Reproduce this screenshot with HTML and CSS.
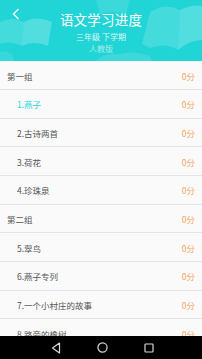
FILE: index.html
```html
<!DOCTYPE html>
<html lang="zh">
<head>
<meta charset="utf-8">
<link rel="stylesheet" href="styles.css">
</head>
<body>
<div class="app">
  <header class="header">
    <svg class="books" width="202" height="61" viewBox="0 0 202 61">
      <path d="M0 22 Q12 16 24 22 Q36 15 52 22 L48 46 Q34 40 22 46 Q10 40 0 44 Z" fill="rgba(255,255,255,0.16)"/>
      <path d="M24 22 Q36 15 52 22 L48 46 Q34 40 22 46 Z" fill="rgba(255,255,255,0.08)"/>
      <path d="M150 12 Q165 2 180 10 Q192 4 202 6 L202 40 Q190 40 178 50 Q165 42 150 48 L142 44 Z" fill="rgba(255,255,255,0.16)"/>
      <path d="M180 10 Q192 4 202 6 L202 40 Q190 40 178 50 Z" fill="rgba(255,255,255,0.08)"/>
      <path d="M96 0 L130 0 L126 14 Q112 10 100 14 Z" fill="rgba(255,255,255,0.12)"/>
      <path d="M96 61 Q104 52 120 54 Q134 50 150 56 L152 61 Z" fill="rgba(255,255,255,0.12)"/>
      <path d="M0 52 Q6 50 12 54 L14 61 L0 61 Z" fill="rgba(255,255,255,0.1)"/>
    </svg>
    <svg class="back" width="8" height="12" viewBox="0 0 8 12">
      <path d="M6.5 1 L1.5 6 L6.5 11" fill="none" stroke="#fff" stroke-width="1.2"/>
    </svg>
    <div class="title">语文学习进度</div>
    <div class="sub">三年级 下学期</div>
    <div class="edition">人教版</div>
  </header>
  <main class="list">
    <div class="row group"><span class="name">第一组</span><span class="score">0分</span></div>
    <div class="row item active"><span class="name">1.燕子</span><span class="score">0分</span></div>
    <div class="row item"><span class="name">2.古诗两首</span><span class="score">0分</span></div>
    <div class="row item"><span class="name">3.荷花</span><span class="score">0分</span></div>
    <div class="row item"><span class="name">4.珍珠泉</span><span class="score">0分</span></div>
    <div class="row group"><span class="name">第二组</span><span class="score">0分</span></div>
    <div class="row item"><span class="name">5.翠鸟</span><span class="score">0分</span></div>
    <div class="row item"><span class="name">6.燕子专列</span><span class="score">0分</span></div>
    <div class="row item"><span class="name">7.一个小村庄的故事</span><span class="score">0分</span></div>
    <div class="row item"><span class="name">8.路旁的橡树</span><span class="score">0分</span></div>
  </main>
  <nav class="navbar">
    <svg width="10" height="12" viewBox="0 0 10 12"><path d="M8.5 1 L1.5 6 L8.5 11 Z" fill="none" stroke="#d8d8d8" stroke-width="1.2" stroke-linejoin="round"/></svg>
    <svg width="11" height="11" viewBox="0 0 11 11"><circle cx="5.5" cy="5.5" r="4.6" fill="none" stroke="#d8d8d8" stroke-width="1.2"/></svg>
    <svg width="10" height="10" viewBox="0 0 10 10"><rect x="1" y="1" width="8" height="8" rx="0.8" fill="none" stroke="#d8d8d8" stroke-width="1.2"/></svg>
  </nav>
</div>
</body>
</html>
```

FILE: styles.css
```css
* { box-sizing: border-box; }
html, body {
  margin: 0;
  padding: 0;
  width: 202px;
  height: 359px;
  overflow: hidden;
  font-family: "Noto Sans CJK SC", "Noto Sans", sans-serif;
  background: #fafafa;
}
.app {
  width: 202px;
  height: 359px;
  display: flex;
  flex-direction: column;
}
.header {
  position: relative;
  height: 61.3px;
  flex: none;
  background: #21d4d6;
  display: flex;
  flex-direction: column;
  align-items: center;
  padding-top: 10.5px;
  color: #fff;
  overflow: hidden;
}
.books {
  position: absolute;
  left: 0;
  top: 0;
}
.back {
  position: absolute;
  left: 12px;
  top: 8px;
}
.title {
  position: relative;
  font-size: 13.5px;
  line-height: 17px;
  letter-spacing: 0.2px;
}
.sub {
  position: relative;
  font-size: 8px;
  line-height: 12px;
  margin-top: 3.5px;
  color: rgba(255,255,255,0.85);
}
.edition {
  position: relative;
  font-size: 8px;
  line-height: 12px;
  color: rgba(255,255,255,0.6);
}
.list {
  flex: 1;
  overflow: hidden;
  background: #fafafa;
}
.row {
  height: 28.67px;
  display: flex;
  align-items: center;
  justify-content: space-between;
  border-bottom: 1px solid #e4e4e4;
  padding-right: 7px;
  font-size: 8.5px;
  color: #555;
  padding-top: 1px;
}
.group { padding-left: 7px; }
.item { padding-left: 17px; }
.item.active .name { color: #2fd8dc; }
.score { color: #f7a55e; }
.navbar {
  height: 23px;
  flex: none;
  background: #000;
  display: flex;
  align-items: center;
  justify-content: center;
  gap: 36px;
  padding-left: 2px;
}
```
